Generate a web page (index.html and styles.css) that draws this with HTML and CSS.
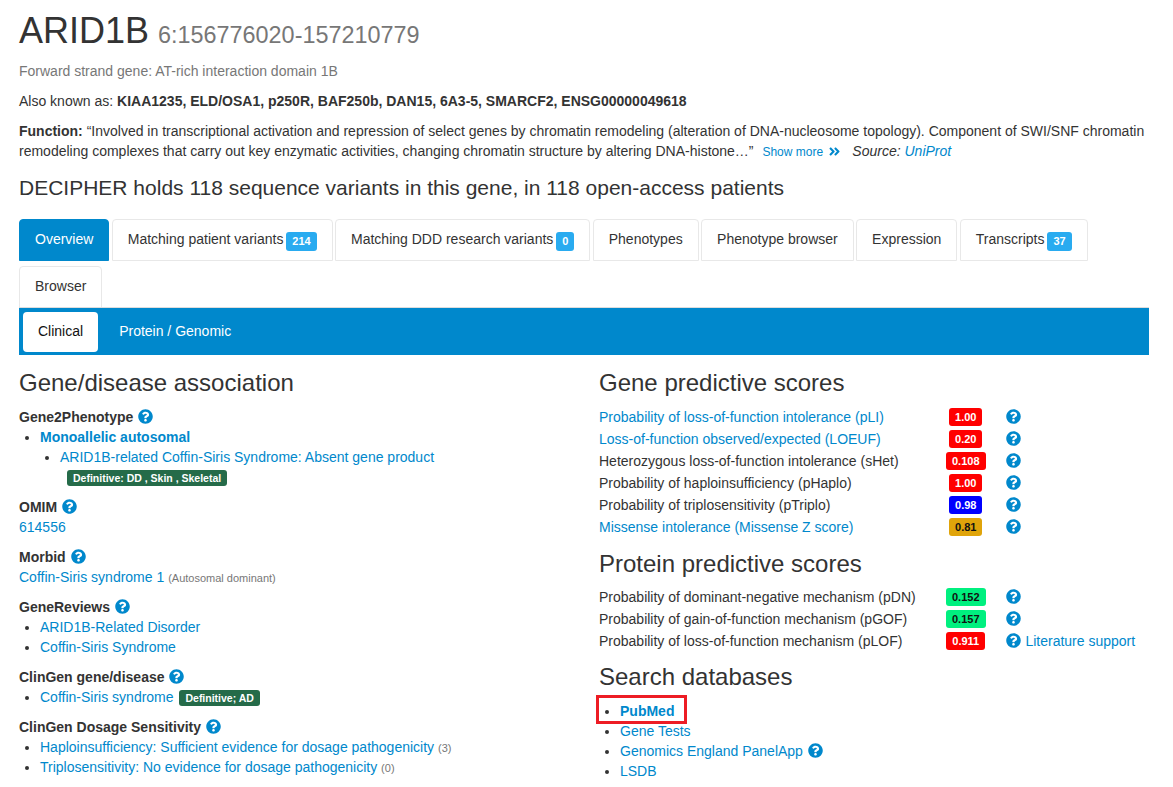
FILE: index.html
```html
<!DOCTYPE html>
<html lang="en">
<head>
<meta charset="utf-8">
<title>ARID1B</title>
<link rel="stylesheet" href="styles.css">
</head>
<body>
<svg class="defs" width="0" height="0" aria-hidden="true">
  <symbol id="q" viewBox="0 0 512 512"><path d="M504 256c0 136.997-111.043 248-248 248S8 392.997 8 256C8 119.083 119.043 8 256 8s248 111.083 248 248zM262.655 90c-54.497 0-89.255 22.957-116.549 63.758-3.536 5.286-2.353 12.415 2.715 16.258l34.699 26.31c5.205 3.947 12.621 3.008 16.665-2.122 17.864-22.658 30.113-35.797 57.303-35.797 20.429 0 45.698 13.148 45.698 32.958 0 14.976-12.363 22.667-32.534 33.976C247.128 238.528 216 254.941 216 296v4c0 6.627 5.373 12 12 12h56c6.627 0 12-5.373 12-12v-1.333c0-28.462 83.186-29.647 83.186-106.667 0-58.002-60.165-102-116.531-102zM256 338c-25.365 0-46 20.635-46 46 0 25.364 20.635 46 46 46s46-20.636 46-46c0-25.365-20.635-46-46-46z"/></symbol>
  <symbol id="dbl" viewBox="0 0 448 512"><path d="M224.3 273l-136 136c-9.4 9.4-24.6 9.4-33.9 0l-22.6-22.6c-9.4-9.4-9.4-24.6 0-33.9l96.4-96.4-96.4-96.4c-9.4-9.4-9.4-24.6 0-33.9L54.3 103c9.4-9.4 24.6-9.4 33.9 0l136 136c9.5 9.4 9.5 24.6.1 34zm192-34l-136-136c-9.4-9.4-24.6-9.4-33.9 0l-22.6 22.6c-9.4 9.4-9.4 24.6 0 33.9l96.4 96.4-96.4 96.4c-9.4 9.4-9.4 24.6 0 33.9l22.6 22.6c9.4 9.4 24.6 9.4 33.9 0l136-136c9.4-9.2 9.4-24.4 0-33.8z"/></symbol>
</svg>
<main class="page">
  <h1 class="title">ARID1B <small>6:156776020-157210779</small></h1>
  <p class="muted line">Forward strand gene: AT-rich interaction domain 1B</p>
  <p class="line">Also known as: <b>KIAA1235, ELD/OSA1, p250R, BAF250b, DAN15, 6A3-5, SMARCF2, ENSG00000049618</b></p>
  <p class="line"><b>Function:</b> “Involved in transcriptional activation and repression of select genes by chromatin remodeling (alteration of DNA-nucleosome topology). Component of SWI/SNF chromatin remodeling complexes that carry out key enzymatic activities, changing chromatin structure by altering DNA-histone…” <a class="more" href="#">Show more <svg class="dbl"><use href="#dbl"/></svg></a> <i class="source">Source: <a href="#">UniProt</a></i></p>
  <h2 class="holds">DECIPHER holds 118 sequence variants in this gene, in 118 open-access patients</h2>

  <nav class="tabs">
    <a class="tab active" href="#">Overview</a>
    <a class="tab" href="#">Matching patient variants <span class="count">214</span></a>
    <a class="tab" href="#">Matching DDD research variants <span class="count">0</span></a>
    <a class="tab" href="#">Phenotypes</a>
    <a class="tab" href="#">Phenotype browser</a>
    <a class="tab" href="#">Expression</a>
    <a class="tab" href="#">Transcripts <span class="count">37</span></a>
    <a class="tab" href="#">Browser</a>
  </nav>
  <nav class="subtabs">
    <a class="pill active" href="#">Clinical</a>
    <a class="pill" href="#">Protein / Genomic</a>
  </nav>

  <div class="cols">
    <section class="col">
      <h3 class="head">Gene/disease association</h3>
      <h4 class="label">Gene2Phenotype <svg class="help"><use href="#q"/></svg></h4>
      <ul class="list">
        <li><a class="strong" href="#">Monoallelic autosomal</a>
          <ul class="list nested">
            <li><a href="#">ARID1B-related Coffin-Siris Syndrome: Absent gene product</a><br><span class="tag">Definitive: DD , Skin , Skeletal</span></li>
          </ul>
        </li>
      </ul>
      <h4 class="label">OMIM <svg class="help"><use href="#q"/></svg></h4>
      <div class="block"><a href="#">614556</a></div>
      <h4 class="label">Morbid <svg class="help"><use href="#q"/></svg></h4>
      <div class="block"><a href="#">Coffin-Siris syndrome 1</a> <span class="note">(Autosomal dominant)</span></div>
      <h4 class="label">GeneReviews <svg class="help"><use href="#q"/></svg></h4>
      <ul class="list">
        <li><a href="#">ARID1B-Related Disorder</a></li>
        <li><a href="#">Coffin-Siris Syndrome</a></li>
      </ul>
      <h4 class="label">ClinGen gene/disease <svg class="help"><use href="#q"/></svg></h4>
      <ul class="list">
        <li><a href="#">Coffin-Siris syndrome</a> <span class="tag side">Definitive; AD</span></li>
      </ul>
      <h4 class="label">ClinGen Dosage Sensitivity <svg class="help"><use href="#q"/></svg></h4>
      <ul class="list">
        <li><a href="#">Haploinsufficiency: Sufficient evidence for dosage pathogenicity</a> <span class="note">(3)</span></li>
        <li><a href="#">Triplosensitivity: No evidence for dosage pathogenicity</a> <span class="note">(0)</span></li>
      </ul>
    </section>

    <section class="col">
      <h3 class="head">Gene predictive scores</h3>
      <table class="scores">
        <tr><td class="name"><a href="#">Probability of loss-of-function intolerance (pLI)</a></td><td class="val"><span class="score red">1.00</span></td><td class="info"><svg class="help"><use href="#q"/></svg></td></tr>
        <tr><td class="name"><a href="#">Loss-of-function observed/expected (LOEUF)</a></td><td class="val"><span class="score red">0.20</span></td><td class="info"><svg class="help"><use href="#q"/></svg></td></tr>
        <tr><td class="name">Heterozygous loss-of-function intolerance (sHet)</td><td class="val"><span class="score red">0.108</span></td><td class="info"><svg class="help"><use href="#q"/></svg></td></tr>
        <tr><td class="name">Probability of haploinsufficiency (pHaplo)</td><td class="val"><span class="score red">1.00</span></td><td class="info"><svg class="help"><use href="#q"/></svg></td></tr>
        <tr><td class="name">Probability of triplosensitivity (pTriplo)</td><td class="val"><span class="score blue">0.98</span></td><td class="info"><svg class="help"><use href="#q"/></svg></td></tr>
        <tr><td class="name"><a href="#">Missense intolerance (Missense Z score)</a></td><td class="val"><span class="score amber">0.81</span></td><td class="info"><svg class="help"><use href="#q"/></svg></td></tr>
      </table>
      <h3 class="head second">Protein predictive scores</h3>
      <table class="scores">
        <tr><td class="name">Probability of dominant-negative mechanism (pDN)</td><td class="val"><span class="score green">0.152</span></td><td class="info"><svg class="help"><use href="#q"/></svg></td></tr>
        <tr><td class="name">Probability of gain-of-function mechanism (pGOF)</td><td class="val"><span class="score green">0.157</span></td><td class="info"><svg class="help"><use href="#q"/></svg></td></tr>
        <tr><td class="name">Probability of loss-of-function mechanism (pLOF)</td><td class="val"><span class="score red">0.911</span></td><td class="info"><svg class="help"><use href="#q"/></svg> <a class="lit" href="#">Literature support</a></td></tr>
      </table>
      <h3 class="head third">Search databases</h3>
      <div class="dbs">
        <div class="mark"></div>
        <ul class="list">
          <li><a class="strong" href="#">PubMed</a></li>
          <li><a href="#">Gene Tests</a></li>
          <li><a href="#">Genomics England PanelApp</a> <svg class="help"><use href="#q"/></svg></li>
          <li><a href="#">LSDB</a></li>
        </ul>
      </div>
    </section>
  </div>
</main>
</body>
</html>
```
FILE: styles.css
```css
* { box-sizing: border-box; }
html, body { margin: 0; padding: 0; }
body {
  font-family: "Liberation Sans", Arial, sans-serif;
  font-size: 14px;
  line-height: 20px;
  color: #333;
  background: #fff;
  overflow: hidden;
}
a { color: #0088cc; text-decoration: none; }
.defs { position: absolute; }
.page { padding: 0 24px 0 19px; }
.title {
  margin: 0;
  padding-top: 11px;
  font-size: 36px;
  font-weight: 400;
  line-height: 40px;
  height: 61px;
}
.title small { font-size: 23.4px; color: #777; margin-left: -1px; }
.line { margin: 0 0 10px; }
.muted { color: #777; }
b { font-weight: 700; }
.more { font-size: 12px; margin-left: 5px; }
.dbl { width: 13px; height: 13px; fill: #0088cc; vertical-align: -2px; margin-left: 2px; }
.source { margin-left: 7px; }
.holds {
  margin: 15px 0 20px;
  font-size: 21px;
  font-weight: 400;
  line-height: 22px;
}

.tabs { display: flex; flex-wrap: wrap; gap: 5px 2.4px; margin-bottom: -1px; }
.tab {
  display: block;
  height: 42px;
  padding: 9px 15px;
  border: 1px solid #e8e8e8;
  border-radius: 4px 4px 0 0;
  color: #333;
  white-space: nowrap;
}
.tab.active { background: #0088cc; border-color: #0088cc; color: #fff; }
.count {
  display: inline-block;
  min-width: 10px;
  margin-left: -1px;
  padding: 3px 6px;
  border-radius: 3px;
  background: #29abf0;
  color: #fff;
  font-size: 11px;
  font-weight: 700;
  line-height: 13px;
  vertical-align: -1px;
  text-align: center;
}
.subtabs {
  position: relative;
  display: flex;
  height: 48px;
  padding: 4px;
  background: #0088cc;
  border-top: 1px solid #ddd;
}
.pill { display: block; padding: 9px 15px; border-radius: 4px; color: #fff; height: 40px; margin-right: 6px; }
.pill.active { background: #fff; color: #111; }

.cols { display: grid; grid-template-columns: 580px 1fr; }
.head {
  margin: 15px 0 11px;
  font-size: 24px;
  font-weight: 400;
  line-height: 26px;
}
.second { margin-top: 13px; margin-bottom: 10px; }
.third { margin-top: 12px; margin-bottom: 11px; }
.label {
  margin: 0;
  font-size: 14px;
  font-weight: 700;
  line-height: 20px;
}
.help {
  width: 15px;
  height: 15px;
  fill: #0088cc;
  vertical-align: -2px;
  margin-left: 1px;
}
.list { margin: 0 0 10px; padding: 0 0 0 21px; }
.nested { margin: 0; padding-left: 20px; list-style: disc; }
.block { margin-bottom: 10px; }
.strong { font-weight: 700; }
.note { font-size: 11px; line-height: 1; color: #777; }
.tag {
  display: inline-block;
  margin: 3px 0 0 7px;
  padding: 2px 6px;
  border-radius: 3px;
  background: #256b49;
  color: #fff;
  font-size: 10.5px;
  font-weight: 700;
  line-height: 12px;
  vertical-align: top;
}
.tag.side { margin-left: 2px; }

.scores { border-collapse: collapse; margin-top: -1px; }
.scores td { padding: 0; height: 22px; }
.name { width: 347px; }
.val { width: 38px; text-align: center; }
.info { padding-left: 20px !important; white-space: nowrap; }
.info .help { margin-left: 0; }
.lit { margin-left: 1px; }
.score {
  display: block;
  width: max-content;
  margin: 0 auto;
  padding: 2px 6px;
  border-radius: 3px;
  color: #fff;
  font-size: 11px;
  font-weight: 700;
  line-height: 14px;
}
.score.red { background: #ff0000; }
.score.blue { background: #0000ff; }
.score.amber { background: #e0a40a; color: #111; }
.score.green { background: #00f07f; color: #111; }
.dbs { position: relative; }
.mark {
  position: absolute;
  left: -3px;
  top: -6px;
  width: 91px;
  height: 29px;
  border: 3px solid #ed1c24;
}
```
